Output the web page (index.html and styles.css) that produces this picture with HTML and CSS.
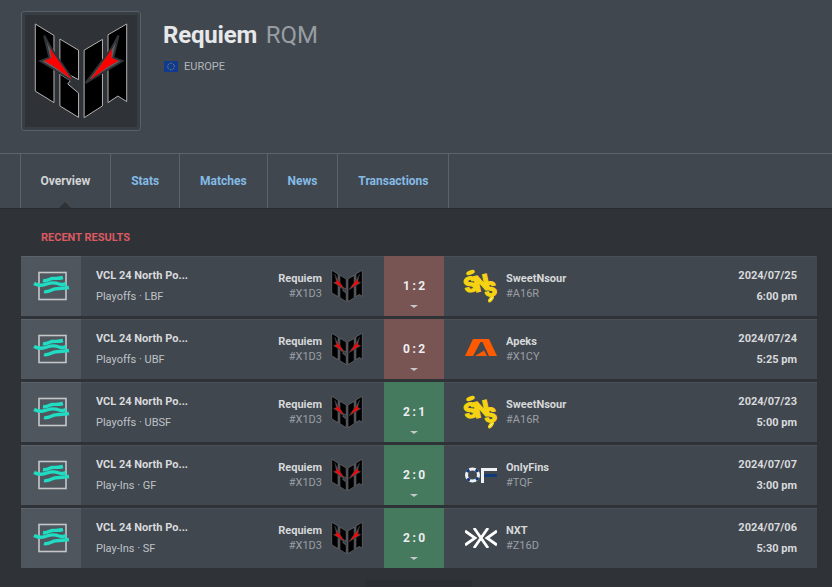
FILE: index.html
```html
<!DOCTYPE html>
<html lang="en">
<head>
<meta charset="utf-8">
<title>Requiem RQM</title>
<link rel="stylesheet" href="styles.css">
</head>
<body>
<svg class="defs" aria-hidden="true">
  <symbol id="rqm" viewBox="40 22 285 293">
    <g fill="#000" stroke="#b5b5b5" stroke-width="3" stroke-linejoin="miter">
      <path d="M43 25 100 60V265L43 230Z"/>
      <path d="M118 71 175 105V195L118 165Z"/>
      <path d="M118 178 150 198 142 208 175 236V310L118 275Z"/>
      <path d="M192 105 248 72V275L192 311Z"/>
      <path d="M265 58 322 25V262L295 245 265 265Z"/>
    </g>
    <g fill="#5f6165" stroke="#2f3237" stroke-width="6" stroke-linejoin="miter">
      <path d="M70 60 95 105 165 205 95 160 58 138 86 128Z"/>
      <path d="M297 60 272 105 197 205 272 160 309 138 281 128Z"/>
    </g>
    <g fill="#f00">
      <path d="M88 100 155 195 100 155 70 137 92 128Z"/>
      <path d="M278 100 211 195 266 155 297 137 275 128Z"/>
    </g>
  </symbol>
  <symbol id="vct" viewBox="0 0 38 32">
    <rect x="6" y="2.5" width="27" height="27" fill="none" stroke="#c4c6c8" stroke-width="1.6"/>
    <g fill="none" stroke="#1fdcc3" stroke-width="3.4">
      <path d="M10 10.5C14 11.5 16 9 19 8.5S25 9 30 7.5"/>
      <path d="M1 13.5C5 15.5 10 15.5 14 14S22 12.5 26 14 31 14 33 13.5"/>
      <path d="M11 21.5C14 22.5 17 21 20 19.5S28 19 36 17.5"/>
    </g>
  </symbol>
  <symbol id="apeks" viewBox="0 0 32 17">
    <path fill="#ff5a00" d="M0 17 8 0H24L32 17H24L17.5 3H15.5L8 17Z"/>
    <path fill="#ff5a00" d="M10 17 19 11.5 22 17Z"/>
  </symbol>
  <symbol id="of" viewBox="0 0 32 16">
    <circle cx="7.5" cy="8" r="6" fill="none" stroke="#eef0f2" stroke-width="3"/>
    <circle cx="7.5" cy="8" r="6" fill="none" stroke="#123a78" stroke-width="3" stroke-dasharray="3 6.4" stroke-dashoffset="-2.5"/>
    <path fill="#eef0f2" d="M16 1H32V4H19V16H16Z"/>
    <path fill="#123a78" d="M19 7H32V10H19Z"/>
  </symbol>
  <symbol id="nxt" viewBox="0 0 32 20">
    <g fill="none" stroke="#fff" stroke-width="2.8">
      <path d="M9 0 23 20M23 0 9 20"/>
      <path d="M0 3 10 10 0 17"/>
      <path d="M32 3 22 10 32 17"/>
    </g>
  </symbol>
</svg>

<header class="team-header">
  <div class="badge"><svg class="badge-logo"><use href="#rqm"/></svg></div>
  <div class="team-info">
    <h1 class="team-name">Requiem <span class="team-tag">RQM</span></h1>
    <div class="team-region">
      <svg class="flag" viewBox="0 0 14 11">
        <rect width="14" height="11" fill="#0f3a8f"/>
        <circle cx="7" cy="5.5" r="3.3" fill="none" stroke="#c9b94a" stroke-width=".8" stroke-dasharray=".8 .93"/>
      </svg>
      <span>EUROPE</span>
    </div>
  </div>
</header>

<nav class="tabs">
  <a class="tab tab-active">Overview</a>
  <a class="tab">Stats</a>
  <a class="tab">Matches</a>
  <a class="tab">News</a>
  <a class="tab">Transactions</a>
</nav>

<main class="content">
  <h2 class="section-title">RECENT RESULTS</h2>
  <div class="rows">

    <article class="row">
      <div class="event-icon"><svg class="vct"><use href="#vct"/></svg></div>
      <div class="event"><div class="event-name">VCL 24 North Po...</div><div class="event-stage">Playoffs · LBF</div></div>
      <div class="team-left"><div class="team-text"><div class="t-name">Requiem</div><div class="t-tag">#X1D3</div></div><svg class="logo-rqm"><use href="#rqm"/></svg></div>
      <div class="score loss"><span>1 : 2</span><i class="caret"></i></div>
      <div class="team-right"><div class="logo-slot">
        <svg class="logo-sns" viewBox="0 0 34 34">
          <ellipse class="sns-fill" cx="6.5" cy="3.5" rx="4.5" ry="2.2" transform="rotate(-20 6.5 3.5)"/>
          <text class="sns-letter sns-1" x="0" y="23" transform="rotate(-14 6 16)">S</text>
          <text class="sns-letter sns-2" x="10" y="22" transform="rotate(-12 17 15)">N</text>
          <text class="sns-letter sns-3" x="20" y="27" transform="rotate(-10 27 20)">S</text>
          <ellipse class="sns-fill" cx="27" cy="30" rx="4" ry="2" transform="rotate(-52 27 30)"/>
          <path class="sns-seam" d="M25.5 31.5 28.5 28.5"/>
        </svg>
      </div><div class="team-text"><div class="t-name">SweetNsour</div><div class="t-tag">#A16R</div></div></div>
      <div class="when"><div>2024/07/25</div><div>6:00 pm</div></div>
    </article>

    <article class="row">
      <div class="event-icon"><svg class="vct"><use href="#vct"/></svg></div>
      <div class="event"><div class="event-name">VCL 24 North Po...</div><div class="event-stage">Playoffs · UBF</div></div>
      <div class="team-left"><div class="team-text"><div class="t-name">Requiem</div><div class="t-tag">#X1D3</div></div><svg class="logo-rqm"><use href="#rqm"/></svg></div>
      <div class="score loss"><span>0 : 2</span><i class="caret"></i></div>
      <div class="team-right"><div class="logo-slot"><svg class="logo-apeks"><use href="#apeks"/></svg></div><div class="team-text"><div class="t-name">Apeks</div><div class="t-tag">#X1CY</div></div></div>
      <div class="when"><div>2024/07/24</div><div>5:25 pm</div></div>
    </article>

    <article class="row">
      <div class="event-icon"><svg class="vct"><use href="#vct"/></svg></div>
      <div class="event"><div class="event-name">VCL 24 North Po...</div><div class="event-stage">Playoffs · UBSF</div></div>
      <div class="team-left"><div class="team-text"><div class="t-name">Requiem</div><div class="t-tag">#X1D3</div></div><svg class="logo-rqm"><use href="#rqm"/></svg></div>
      <div class="score win"><span>2 : 1</span><i class="caret"></i></div>
      <div class="team-right"><div class="logo-slot">
        <svg class="logo-sns" viewBox="0 0 34 34">
          <ellipse class="sns-fill" cx="6.5" cy="3.5" rx="4.5" ry="2.2" transform="rotate(-20 6.5 3.5)"/>
          <text class="sns-letter sns-1" x="0" y="23" transform="rotate(-14 6 16)">S</text>
          <text class="sns-letter sns-2" x="10" y="22" transform="rotate(-12 17 15)">N</text>
          <text class="sns-letter sns-3" x="20" y="27" transform="rotate(-10 27 20)">S</text>
          <ellipse class="sns-fill" cx="27" cy="30" rx="4" ry="2" transform="rotate(-52 27 30)"/>
          <path class="sns-seam" d="M25.5 31.5 28.5 28.5"/>
        </svg>
      </div><div class="team-text"><div class="t-name">SweetNsour</div><div class="t-tag">#A16R</div></div></div>
      <div class="when"><div>2024/07/23</div><div>5:00 pm</div></div>
    </article>

    <article class="row">
      <div class="event-icon"><svg class="vct"><use href="#vct"/></svg></div>
      <div class="event"><div class="event-name">VCL 24 North Po...</div><div class="event-stage">Play-Ins · GF</div></div>
      <div class="team-left"><div class="team-text"><div class="t-name">Requiem</div><div class="t-tag">#X1D3</div></div><svg class="logo-rqm"><use href="#rqm"/></svg></div>
      <div class="score win"><span>2 : 0</span><i class="caret"></i></div>
      <div class="team-right"><div class="logo-slot"><svg class="logo-of"><use href="#of"/></svg></div><div class="team-text"><div class="t-name">OnlyFins</div><div class="t-tag">#TQF</div></div></div>
      <div class="when"><div>2024/07/07</div><div>3:00 pm</div></div>
    </article>

    <article class="row">
      <div class="event-icon"><svg class="vct"><use href="#vct"/></svg></div>
      <div class="event"><div class="event-name">VCL 24 North Po...</div><div class="event-stage">Play-Ins · SF</div></div>
      <div class="team-left"><div class="team-text"><div class="t-name">Requiem</div><div class="t-tag">#X1D3</div></div><svg class="logo-rqm"><use href="#rqm"/></svg></div>
      <div class="score win"><span>2 : 0</span><i class="caret"></i></div>
      <div class="team-right"><div class="logo-slot"><svg class="logo-nxt"><use href="#nxt"/></svg></div><div class="team-text"><div class="t-name">NXT</div><div class="t-tag">#Z16D</div></div></div>
      <div class="when"><div>2024/07/06</div><div>5:30 pm</div></div>
    </article>

  </div>
  <div class="more"></div>
</main>
</body>
</html>
```

FILE: styles.css
```css
* { box-sizing: border-box; }
html, body { margin: 0; padding: 0; height: 587px; overflow: hidden; }
body { background: #2f3237; font-family: Roboto, "Liberation Sans", sans-serif; color: #d6d8da; }
.defs { position: absolute; width: 0; height: 0; }

.team-header {
  display: flex;
  height: 153px;
  padding: 11px 21px 0;
  background: #41474f;
}
.badge {
  width: 120px;
  height: 120px;
  padding: 3px;
  background: #393d44;
  border: 1px solid #5a6069;
  border-radius: 3px;
  display: flex;
}
.badge-logo {
  width: 112px;
  height: 112px;
  padding: 8px 9px;
  background: #2f3237;
}
.team-info { margin-left: 22px; padding-top: 8px; }
.team-name {
  margin: 0;
  font-size: 24px;
  line-height: 32px;
  font-weight: 700;
  color: #e6e8ea;
  letter-spacing: -.2px;
}
.team-tag { font-weight: 400; color: #989da3; margin-left: 3px; letter-spacing: 0; }
.team-region {
  display: flex;
  align-items: center;
  gap: 6px;
  margin-top: 10px;
  font-size: 11px;
  line-height: 11px;
  color: #b3b6ba;
}
.flag { width: 14px; height: 11px; margin-left: 1px; }

.tabs {
  display: flex;
  height: 56px;
  padding-left: 20px;
  background: #41474f;
  border-top: 1px solid #5d636b;
  border-bottom: 1px solid #2a2c31;
}
.tab {
  position: relative;
  padding: 19px 19.85px 0 20px;
  border-left: 1px solid #5d636b;
  font-size: 12px;
  line-height: 16px;
  font-weight: 700;
  color: #84bbe6;
}
.tab:last-child { border-right: 1px solid #5d636b; }
.tab-active { color: #d2d4d6; padding-left: 19.5px; }
.tab-active::after {
  content: "";
  position: absolute;
  left: 38px;
  bottom: 0;
  border: 6px solid transparent;
  border-top: 0;
  border-bottom-color: #2f3237;
}

.content { padding: 21px 15px 0 21px; }
.section-title {
  margin: 0 0 11px 20px;
  font-size: 11px;
  line-height: 15px;
  font-weight: 700;
  color: #dc5a62;
}
.rows { display: flex; flex-direction: column; gap: 3px; }
.row {
  display: grid;
  grid-template-columns: 60px 303px 60px 1fr;
  height: 60px;
  background: #41474f;
  border-top: 1px solid #4a5058;
  position: relative;
}
.event-icon {
  background: #50565e;
  margin-top: -1px;
  border-top: 1px solid #5c626a;
  display: flex;
  align-items: center;
  justify-content: center;
  padding-bottom: 1px;
}
.vct { width: 38px; height: 32px; margin-left: 2px; }

.event {
  position: absolute;
  left: 75px;
  top: 0;
  bottom: 2px;
  display: flex;
  flex-direction: column;
  justify-content: center;
  gap: 6px;
  font-size: 11px;
  line-height: 15px;
}
.event-name { font-weight: 700; color: #d8dadc; }
.event-stage { color: #bfc3c7; }

.team-left {
  grid-column: 2;
  display: flex;
  align-items: center;
  justify-content: flex-end;
  gap: 9px;
  padding: 0 21px 2px 0;
  text-align: right;
}
.team-text { font-size: 11px; line-height: 15px; }
.t-name { font-weight: 700; color: #d6d8da; }
.t-tag { color: #9a9fa5; }
.logo-rqm { width: 32px; height: 32px; }

.score {
  grid-column: 3;
  margin-top: -1px;
  position: relative;
  display: flex;
  align-items: center;
  justify-content: center;
  font-size: 12px;
  font-weight: 700;
  letter-spacing: -.2px;
  color: #eceeef;
}
.loss { background: #785553; }
.win { background: #457a5f; }
.caret {
  position: absolute;
  left: 26px;
  bottom: 8px;
  border: 4px solid transparent;
  border-bottom: 0;
  border-top: 3px solid #c6c8ca;
}

.team-right {
  grid-column: 4;
  display: flex;
  align-items: center;
  padding: 0 20px 2px;
}
.logo-slot {
  width: 33px;
  height: 34px;
  margin-right: 9px;
  display: flex;
  align-items: center;
  justify-content: center;
}
.logo-sns { width: 34px; height: 34px; flex: none; overflow: visible; }
.sns-fill { fill: #f5d312; }
.sns-seam { stroke: #fff; stroke-width: 1; }
.sns-letter {
  fill: #f5d312;
  stroke: #f5d312;
  stroke-width: 1.1px;
  font-family: Roboto, sans-serif;
  font-weight: 900;
}
.sns-1 { font-size: 21px; }
.sns-2 { font-size: 22px; }
.sns-3 { font-size: 20px; }
.logo-apeks { width: 32px; height: 17px; flex: none; margin-bottom: 2px; }
.logo-of { width: 32px; height: 16px; flex: none; }
.logo-nxt { width: 32px; height: 20px; flex: none; }

.when {
  position: absolute;
  right: 20px;
  top: 0;
  bottom: 2px;
  display: flex;
  flex-direction: column;
  justify-content: center;
  gap: 6px;
  text-align: right;
  font-size: 11px;
  line-height: 15px;
  font-weight: 700;
  color: #d8dadc;
}

.more {
  width: 107px;
  height: 20px;
  margin: 12px 0 0 344px;
  border-radius: 3px;
  background: #2b2e32;
}
```
